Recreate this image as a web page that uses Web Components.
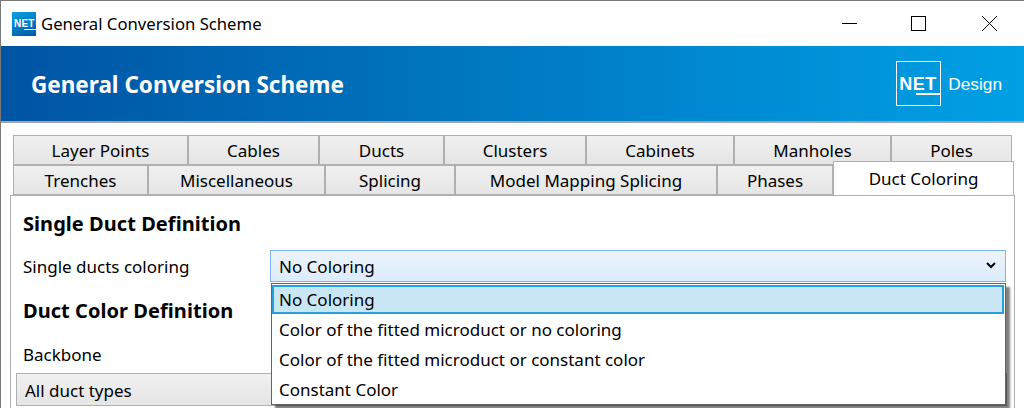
<!DOCTYPE html>
<html><head><meta charset="utf-8"><style>
html,body{margin:0;padding:0;background:#fff;overflow:hidden;height:408px}
body{font-family:"Noto Sans","Open Sans",sans-serif}
</style></head><body>
<conv-window></conv-window>
<script>
function def(name, css, html){
  customElements.define(name, class extends HTMLElement{
    constructor(){super();const r=this.attachShadow({mode:'open'});r.innerHTML='<style>'+css+'</style>'+html;}
  });
}
const font='"Noto Sans","Open Sans",sans-serif';
def('title-bar',`
:host{display:flex;align-items:center;height:45px;background:#fff;border-top:1px solid #787878;color:#000;font:16.7px/20px ${font}}
.ic{width:24px;height:24px;margin-left:11px;margin-right:5px;background:linear-gradient(160deg,#0a9fe0,#0058a8);position:relative;color:#fff;font:900 10px/10px "Liberation Sans",sans-serif;text-align:center}
.ic span{position:absolute;left:2px;top:7px;letter-spacing:.2px}
.ic i{position:absolute;left:12px;right:0;top:17px;height:1px;background:#fff}
.t{flex:1;padding-top:1px}
.b{width:68px;height:45px;display:flex;align-items:center;justify-content:center}
.b svg{display:block;margin-top:1px}
`,`<div class="ic"><span>NET</span><i></i></div><div class="t">General Conversion Scheme</div>
<div class="b"><svg width="16" height="16" viewBox="0 0 16 16"><path d="M0 7.5H15" stroke="#000" fill="none"/></svg></div>
<div class="b" style="width:70px"><svg width="16" height="16" viewBox="0 0 16 16"><rect x=".5" y=".5" width="14" height="14" stroke="#000" fill="none"/></svg></div>
<div class="b" style="margin-left:2px"><svg width="16" height="16" viewBox="0 0 16 16"><path d="M0 0L15 15M15 0L0 15" stroke="#000" fill="none"/></svg></div>`);
def('brand-bar',`
:host{display:flex;align-items:center;height:75px;background:linear-gradient(90deg,#0054a4,#00a0e4);color:#fff;border-bottom:2px solid #a4a4a4;padding:0 22px 0 30px}
.t{flex:1;font:700 22.5px/28px ${font};padding-top:2px}
.logo{width:45px;height:45px;border:1px solid #fff;box-sizing:border-box;position:relative;font:900 18px/18px "Liberation Sans",sans-serif;margin-right:7px}
.logo i{position:absolute;right:0;top:31px;width:24px;height:2px;background:#fff}
.logo span{position:absolute;left:2px;top:13px;letter-spacing:.5px}
.d{font:17.3px/20px "Liberation Sans",sans-serif}
`,`<div class="t">General Conversion Scheme</div><div class="logo"><span>NET</span><i></i></div><div class="d">Design</div>`);
def('tab-row',`:host{display:flex;height:30px;margin-left:12px;position:relative}`,`<slot></slot>`);
def('tab-item',`
:host{display:flex;flex:0 0 auto;box-sizing:border-box;align-items:center;justify-content:center;height:30px;border:1px solid #b0b0b0;background:linear-gradient(#f0f0f0,#e5e5e5);font:17px/20px ${font};color:#000;padding-top:1px}
:host([active]){background:#fff;height:34px;margin-top:-4px;border-bottom:0;z-index:2;padding:0}
`,`<slot></slot>`);
def('drop-list',`
:host{display:block;position:absolute;left:270px;top:283px;width:735px;height:122px;box-sizing:border-box;background:#fff;border:1px solid #646464;box-shadow:4px 4px 2px rgba(0,0,0,.5);padding:1px 1px 1px 0;z-index:5;font:17px/20px ${font};color:#000}
`,`<slot></slot>`);
def('drop-opt',`
:host{display:flex;align-items:center;box-sizing:border-box;height:30px;padding:0 7px}
:host([sel]){background:#c9e6f5;border:2px solid #26a0da;padding:0 5px;height:29px;margin-bottom:1px}
`,`<slot></slot>`);
def('conv-window',`
:host{display:block;width:1024px;height:408px;box-sizing:border-box;border-left:1px solid #787878;position:relative;overflow:hidden;font:17px/20px ${font};color:#000;background:#fff}
.tabs{padding-top:12px}
.panel{box-sizing:border-box;margin:0 9px 0 9px;height:240px;border:1px solid #b0b0b0;border-bottom:0;padding:0 12px;background:#fff}
h3{margin:0;font:700 20px/26px ${font};letter-spacing:.05px;color:#000}
.a{padding-top:15px}
.row{display:flex;align-items:center;margin-top:13px;height:32px}
.lbl{width:247px;padding-top:2px}
.combo{flex:1;box-sizing:border-box;height:32px;margin-right:-4px;border:1px solid #7eb4ea;background:linear-gradient(#ecf4fc,#dcecfc);display:flex;align-items:center;padding:0 8px;justify-content:space-between}
.combo span{padding-top:2px}
.combo svg{display:block;margin-top:-2px}
.b{margin-top:16px}
.bb{margin-top:21px;height:20px}
.allb{box-sizing:border-box;height:33px;margin:8px -5px 0 -7px;border:1px solid #b0b0b0;background:linear-gradient(#f0f0f0,#e5e5e5);display:flex;align-items:center;padding:2px 8px 0}
`,`<title-bar></title-bar><brand-bar></brand-bar>
<div class="tabs">
<tab-row><tab-item style="width:175px">Layer Points</tab-item><tab-item style="width:131px">Cables</tab-item><tab-item style="width:125px">Ducts</tab-item><tab-item style="width:142px">Clusters</tab-item><tab-item style="width:148px">Cabinets</tab-item><tab-item style="width:157px">Manholes</tab-item><tab-item style="width:121px">Poles</tab-item></tab-row>
<tab-row><tab-item style="width:135px">Trenches</tab-item><tab-item style="width:177px">Miscellaneous</tab-item><tab-item style="width:130px">Splicing</tab-item><tab-item style="width:262px">Model Mapping Splicing</tab-item><tab-item style="width:116px">Phases</tab-item><tab-item active style="width:181px">Duct Coloring</tab-item></tab-row>
</div>
<div class="panel">
<div class="a"><h3>Single Duct Definition</h3></div>
<div class="row"><div class="lbl">Single ducts coloring</div><div class="combo"><span>No Coloring</span><svg width="12" height="8" viewBox="0 0 12 8"><path d="M2 2L6 6L10 2" stroke="#000" stroke-width="2" fill="none"/></svg></div></div>
<div class="b"><h3>Duct Color Definition</h3></div>
<div class="bb">Backbone</div>
<div class="allb">All duct types</div>
</div>
<drop-list><drop-opt sel>No Coloring</drop-opt><drop-opt>Color of the fitted microduct or no coloring</drop-opt><drop-opt>Color of the fitted microduct or constant color</drop-opt><drop-opt>Constant Color</drop-opt></drop-list>`);
</script></body></html>
